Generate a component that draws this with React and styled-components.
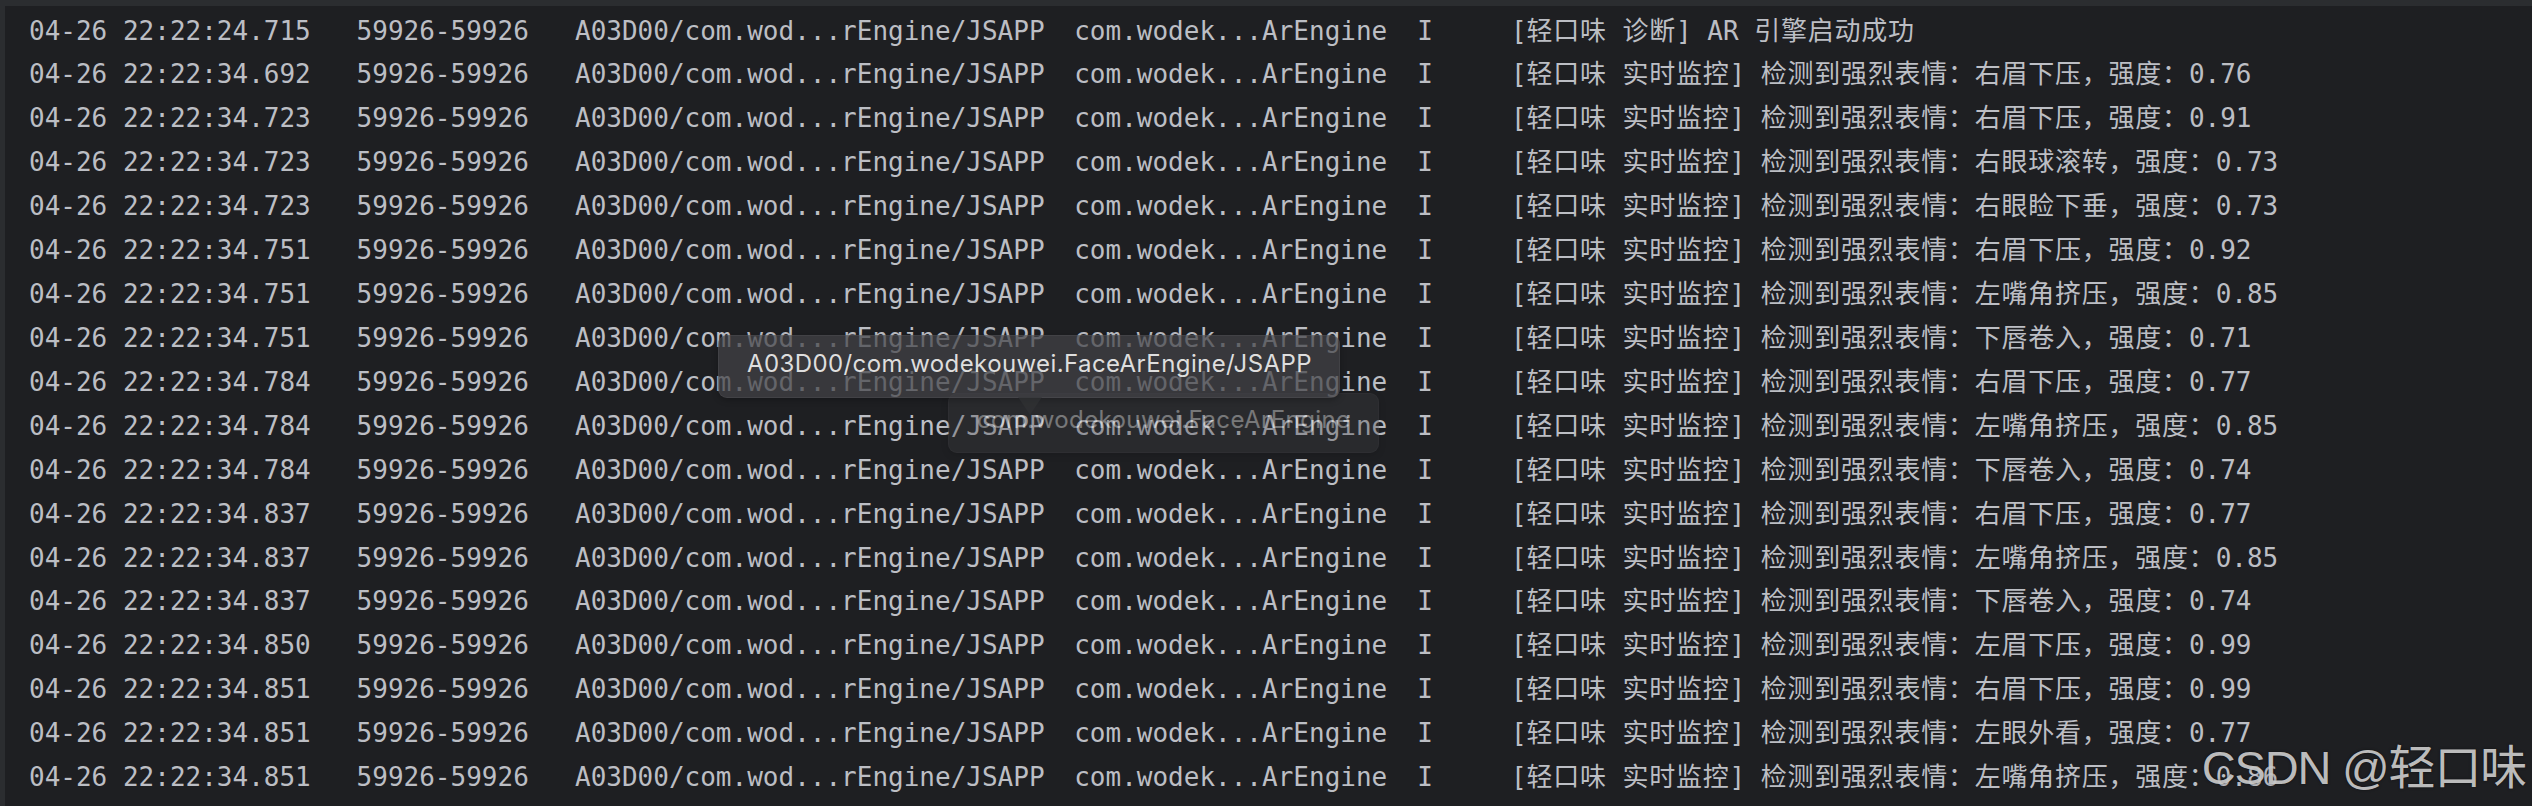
import React from 'react';
import styled, { createGlobalStyle, css } from 'styled-components';

const GlobalStyle = createGlobalStyle`
  html, body { margin: 0; padding: 0; background: #1e1f22; }
  body { overflow: hidden; }
`;

const Frame = styled.div`
  position: relative;
  width: 2532px;
  height: 806px;
  overflow: hidden;
  background: #1e1f22;
  display: flex;
  flex-direction: column;
`;

const TopBar = styled.div`
  flex: none;
  height: 6px;
  background: #2b2d30;
`;

const Body = styled.div`
  flex: 1;
  min-height: 0;
  display: flex;
`;

const SideStrip = styled.div`
  flex: none;
  width: 5px;
  background: #2b2d30;
`;

const LogList = styled.div`
  flex: 1;
  padding: 3.5px 0 0 24px;
  display: flex;
  flex-direction: column;
`;

const Row = styled.div`
  flex: none;
  display: grid;
  grid-template-columns: 327.6px 218.4px 499.2px 343.2px 93.6px 1fr;
  height: 43.93px;
  line-height: 43.93px;
  font-family: "DejaVu Sans Mono", "Noto Sans CJK SC", monospace;
  font-size: 26px;
  color: #bcbec4;
  white-space: pre;
`;

const Cell = styled.span`
  overflow: hidden;
`;

const Cjk = styled.span`
  letter-spacing: 0.75px;
`;

const Tooltip = styled.div`
  position: absolute;
  left: ${p => p.$x}px;
  top: ${p => p.$y}px;
  height: ${p => p.$h}px;
  padding: 0 27px 0 28px;
  box-sizing: border-box;
  border-radius: 9px;
  background: rgba(66, 67, 70, 0.72);
  border: 1px solid rgba(255, 255, 255, 0.05);
  box-shadow: 0 2px 6px rgba(0, 0, 0, 0.25);
  font-family: Inter, "Liberation Sans", sans-serif;
  font-size: 24px;
  letter-spacing: 0.4px;
  color: #dedede;
  line-height: ${p => p.$h - 8}px;
  white-space: nowrap;
  ${p => p.$faded && css`
    opacity: 0.45;
    color: #e4e4e4;
  `}
  ${p => p.$tail && css`
    &::after {
      content: "";
      position: absolute;
      left: ${p.$tail}px;
      bottom: -18px;
      border-left: 12px solid transparent;
      border-right: 12px solid transparent;
      border-top: 18px solid rgba(50, 51, 54, 0.6);
    }
  `}
`;

const Watermark = styled.div`
  position: absolute;
  right: 6px;
  top: 744px;
  font-family: "Liberation Sans", "Noto Sans CJK SC", sans-serif;
  font-size: 47px;
  line-height: 47px;
  letter-spacing: -1.2px;
  color: rgba(205, 205, 205, 0.92);
  text-shadow: 0 0 3px rgba(0, 0, 0, 0.45);
  white-space: nowrap;
`;

const rows = [
  ['04-26 22:22:24.715', '[轻口味 诊断] AR 引擎启动成功'],
  ['04-26 22:22:34.692', '[轻口味 实时监控] 检测到强烈表情：右眉下压，强度：0.76'],
  ['04-26 22:22:34.723', '[轻口味 实时监控] 检测到强烈表情：右眉下压，强度：0.91'],
  ['04-26 22:22:34.723', '[轻口味 实时监控] 检测到强烈表情：右眼球滚转，强度：0.73'],
  ['04-26 22:22:34.723', '[轻口味 实时监控] 检测到强烈表情：右眼睑下垂，强度：0.73'],
  ['04-26 22:22:34.751', '[轻口味 实时监控] 检测到强烈表情：右眉下压，强度：0.92'],
  ['04-26 22:22:34.751', '[轻口味 实时监控] 检测到强烈表情：左嘴角挤压，强度：0.85'],
  ['04-26 22:22:34.751', '[轻口味 实时监控] 检测到强烈表情：下唇卷入，强度：0.71'],
  ['04-26 22:22:34.784', '[轻口味 实时监控] 检测到强烈表情：右眉下压，强度：0.77'],
  ['04-26 22:22:34.784', '[轻口味 实时监控] 检测到强烈表情：左嘴角挤压，强度：0.85'],
  ['04-26 22:22:34.784', '[轻口味 实时监控] 检测到强烈表情：下唇卷入，强度：0.74'],
  ['04-26 22:22:34.837', '[轻口味 实时监控] 检测到强烈表情：右眉下压，强度：0.77'],
  ['04-26 22:22:34.837', '[轻口味 实时监控] 检测到强烈表情：左嘴角挤压，强度：0.85'],
  ['04-26 22:22:34.837', '[轻口味 实时监控] 检测到强烈表情：下唇卷入，强度：0.74'],
  ['04-26 22:22:34.850', '[轻口味 实时监控] 检测到强烈表情：左眉下压，强度：0.99'],
  ['04-26 22:22:34.851', '[轻口味 实时监控] 检测到强烈表情：右眉下压，强度：0.99'],
  ['04-26 22:22:34.851', '[轻口味 实时监控] 检测到强烈表情：左眼外看，强度：0.77'],
  ['04-26 22:22:34.851', '[轻口味 实时监控] 检测到强烈表情：左嘴角挤压，强度：0.86'],
];

function Message({ text }) {
  const parts = text.split(/([\u3000-\u9fff\uff00-\uffef]+)/);
  return (
    <Cell>
      {parts.map((p, i) =>
        /[\u3000-\u9fff\uff00-\uffef]/.test(p) ? <Cjk key={i}>{p}</Cjk> : p
      )}
    </Cell>
  );
}

export default function App() {
  return (
    <>
      <GlobalStyle />
      <Frame>
        <TopBar />
        <Body>
          <SideStrip />
          <LogList>
            {rows.map(([time, msg], i) => (
              <Row key={i}>
                <Cell>{time}</Cell>
                <Cell>59926-59926</Cell>
                <Cell>A03D00/com.wod...rEngine/JSAPP</Cell>
                <Cell>com.wodek...ArEngine</Cell>
                <Cell>I</Cell>
                <Message text={msg} />
              </Row>
            ))}
          </LogList>
        </Body>
        <Tooltip $x={948} $y={393} $h={60} $faded>
          com.wodekouwei.FaceArEngine
        </Tooltip>
        <Tooltip $x={718} $y={335} $h={63} $tail={299}>
          A03D00/com.wodekouwei.FaceArEngine/JSAPP
        </Tooltip>
        <Watermark>CSDN @轻口味</Watermark>
      </Frame>
    </>
  );
}
